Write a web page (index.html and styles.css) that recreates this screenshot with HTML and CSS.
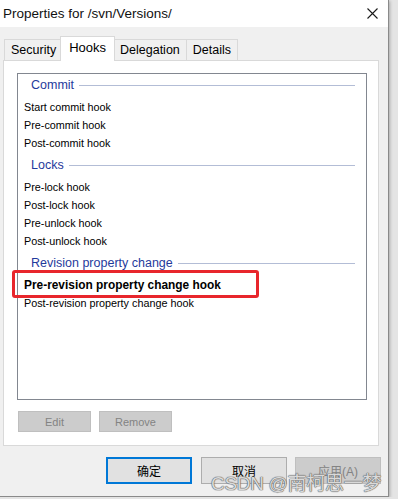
FILE: index.html
```html
<!DOCTYPE html>
<html>
<head>
    <title>Properties for /svn/Versions/</title>
    <link rel="stylesheet" href="styles.css">
</head>
<body>
    <div class="dialog">
        <!-- Title bar -->
        <div class="titlebar">
            <span class="title">Properties for /svn/Versions/</span>
            <svg class="close" width="11" height="11" viewBox="0 0 11 11">
                <path d="M0.5 0.5 L10.5 10.5 M10.5 0.5 L0.5 10.5" stroke="#1a1a1a" stroke-width="1.1" fill="none"/>
            </svg>
        </div>

        <!-- Tabs -->
        <div class="tabs">
            <div class="tab">Security</div>
            <div class="tab active">Hooks</div>
            <div class="tab">Delegation</div>
            <div class="tab">Details</div>
        </div>

        <div class="panel">
            <div class="list">
                <div class="group first">Commit</div>
                <div class="item">Start commit hook</div>
                <div class="item">Pre-commit hook</div>
                <div class="item">Post-commit hook</div>

                <div class="group">Locks</div>
                <div class="item">Pre-lock hook</div>
                <div class="item">Post-lock hook</div>
                <div class="item">Pre-unlock hook</div>
                <div class="item">Post-unlock hook</div>

                <div class="group">Revision property change</div>
                <div class="item selected">Pre-revision property change hook<span class="mark"></span></div>
                <div class="item">Post-revision property change hook</div>
            </div>
            <div class="panel-buttons">
                <button class="btn small disabled">Edit</button>
                <button class="btn small disabled">Remove</button>
            </div>
        </div>

        <div class="footer">
            <button class="btn big default">确定</button>
            <button class="btn big">取消</button>
            <button class="btn big disabled">应用(A)</button>
        </div>

        <div class="watermark">CSDN @南柯思一梦</div>
    </div>
</body>
</html>
```

FILE: styles.css
```css
body {
    margin: 0;
    background: #e4e4e4;
    font-family: "Liberation Sans", "Noto Sans CJK SC", sans-serif;
    color: #000;
}
.dialog {
    position: relative;
    width: 388px;
    height: 496px;
    background: #f0f0f0;
    border-right: 1px solid #8a8a8a;
    border-bottom: 1px solid #8a8a8a;
    box-shadow: 1px 1px 3px rgba(0,0,0,0.25);
}
.titlebar {
    height: 27px;
    background: #fff;
    display: flex;
    align-items: center;
    justify-content: space-between;
    padding: 0 10px 0 3px;
}
.title { font-size: 13.5px; color: #111; }
.close { margin-top: -1px; }

.tabs {
    display: flex;
    align-items: flex-end;
    height: 24px;
    margin-top: 9px;
    padding-left: 4px;
}
.tab {
    height: 21px;
    line-height: 21px;
    padding: 0 6px;
    font-size: 12.5px;
    border: 1px solid #d9d9d9;
    border-bottom: none;
    border-right: none;
    box-sizing: border-box;
    background: #f0f0f0;
}
.tab:nth-child(4) { border-right: 1px solid #d9d9d9; }
.tab.active {
    height: 25px;
    line-height: 22px;
    margin: 0 -2px -1px;
    padding: 0 8px;
    background: #fff;
    border-right: 1px solid #d9d9d9;
    position: relative;
    z-index: 1;
    font-size: 13px;
}
.tab.active + .tab { border-left: none; padding-left: 7px; }

.panel {
    margin-left: 3px;
    width: 376px;
    height: 386px;
    box-sizing: border-box;
    background: #fff;
    border: 1px solid #d9d9d9;
    padding: 12px 0 0 13px;
}
.list {
    width: 350px;
    height: 327px;
    box-sizing: border-box;
    border: 1px solid #828790;
}
.group {
    height: 26px;
    display: flex;
    align-items: center;
    padding: 0 11px 0 13px;
    font-size: 12.5px;
    color: #1f3a9c;
}
.group.first { margin-top: -2px; }
.group::after {
    content: "";
    flex: 1;
    height: 1px;
    margin-left: 5px;
    background: #b3bdd6;
}
.item {
    position: relative;
    height: 18px;
    line-height: 18px;
    padding-left: 6px;
    font-size: 10.8px;
}
.item.selected { font-weight: bold; font-size: 11.9px; }
.mark {
    position: absolute;
    left: -6px;
    top: -6px;
    width: 247px;
    height: 28px;
    box-sizing: border-box;
    border: 3px solid #e8262c;
    border-radius: 3px;
}

.panel-buttons {
    display: flex;
    gap: 8px;
    margin: 11px 0 0 1px;
}
.btn {
    font-family: "Liberation Sans", "Noto Sans CJK SC", sans-serif;
    background: #e1e1e1;
    border: 1px solid #adadad;
    color: #000;
    padding: 0;
    box-sizing: border-box;
}
.btn.small { width: 73px; height: 21px; font-size: 11px; }
.btn.disabled { background: #cccccc; border-color: #bfbfbf; color: #838383; }
.btn.big { width: 86px; height: 27px; font-size: 12px; }
.btn.default { border: 2px solid #0078d7; }

.footer {
    display: flex;
    justify-content: flex-end;
    gap: 8px;
    margin-top: 11px;
    padding-right: 7px;
}
.footer .btn.default { margin-right: 1px; }

.watermark {
    position: absolute;
    left: 211px;
    top: 468px;
    font-size: 19px;
    letter-spacing: -0.3px;
    color: rgba(240,240,240,0.85);
    text-shadow: 0 0 1px #5e5e5e, 0 0 1px #5e5e5e, 0 0 1px #5e5e5e;
    white-space: nowrap;
}
```
